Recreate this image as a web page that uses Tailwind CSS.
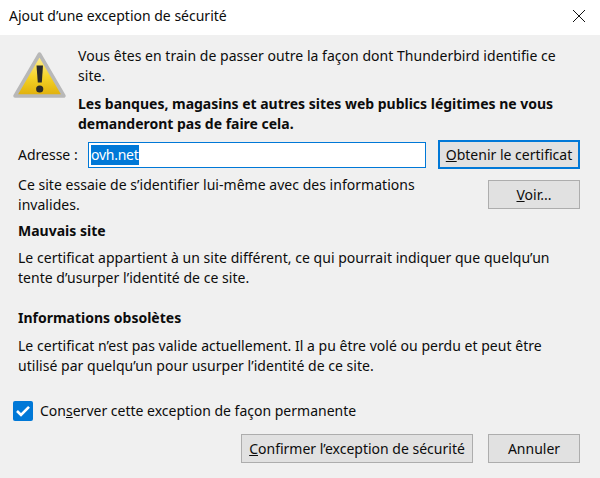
<!DOCTYPE html>
<html lang="fr">
<head>
  <meta charset="UTF-8" />
  <title>Ajout d'une exception de sécurité</title>
  <script src="https://cdn.jsdelivr.net/npm/@tailwindcss/browser@4"></script>
</head>
<body class="w-[600px] h-[478px] overflow-hidden bg-[#f0f0f0] font-['Noto_Sans',sans-serif] text-[14px] leading-[20px] text-[#0c0c0c]">
  <!-- Title bar -->
  <div class="h-[35px] bg-white flex items-center justify-between pl-[9px] pr-[14px] pb-[3px]">
    <span>Ajout d’une exception de sécurité</span>
    <svg width="14" height="14" viewBox="0 0 14 14" fill="none" stroke="#111" stroke-width="1"><path d="M1 1l12 12M13 1L1 13"/></svg>
  </div>

  <div class="pl-[18px] pr-[20px]">
    <!-- Warning -->
    <div class="flex pt-[11px] h-[105px]">
      <svg class="w-[56px] h-[50px] ml-[-5px] mr-[9px] mt-[5px] shrink-0" width="56" height="50" viewBox="0 0 56 50">
        <defs>
          <linearGradient id="warnFill" x1="0" y1="0" x2="0" y2="1">
            <stop offset="0" stop-color="#fdf0a0"/>
            <stop offset="0.55" stop-color="#f5d327"/>
            <stop offset="1" stop-color="#dfae0a"/>
          </linearGradient>
        </defs>
        <path d="M26.5 3L51 45H2Z" fill="url(#warnFill)" stroke="#b8b8b8" stroke-width="3.5" stroke-linejoin="round"/>
        <path d="M23.5 14.5h6.5l-1.2 17h-4Z" fill="#2a2a2a"/>
        <circle cx="26.7" cy="38" r="3.6" fill="#2a2a2a"/>
      </svg>
      <div class="whitespace-nowrap tracking-[0.03px]">
        <p>Vous êtes en train de passer outre la façon dont Thunderbird identifie ce<br>site.</p>
        <p class="font-bold mt-[8px] tracking-[-0.01px]">Les banques, magasins et autres sites web publics légitimes ne vous<br>demanderont pas de faire cela.</p>
      </div>
    </div>

    <!-- Address -->
    <div class="flex items-center h-[29px]">
      <span class="w-[70px] shrink-0">Adresse :</span>
      <div class="w-[338px] h-[26px] bg-white border border-[#0078d7] flex items-center pl-[2px]">
        <span class="bg-[#0078d7] text-white h-[20px] tracking-[-0.25px]">ovh.net</span>
      </div>
      <button class="ml-[12px] w-[142px] h-[29px] bg-[#e1e1e1] border-2 border-[#0078d7]"><u>O</u>btenir le certificat</button>
    </div>

    <!-- Status -->
    <div class="flex justify-between mt-[6px] h-[41px]">
      <p class="whitespace-nowrap tracking-[0.03px]">Ce site essaie de s’identifier lui-même avec des informations<br>invalides.</p>
      <button class="w-[92px] h-[29px] mt-[5px] bg-[#e1e1e1] border border-[#adadad]"><u>V</u>oir...</button>
    </div>

    <h2 class="font-bold mt-[5px]">Mauvais site</h2>
    <p class="mt-[7px] whitespace-nowrap tracking-[0.03px]">Le certificat appartient à un site différent, ce qui pourrait indiquer que quelqu’un<br>tente d’usurper l’identité de ce site.</p>

    <h2 class="font-bold mt-[20px]">Informations obsolètes</h2>
    <p class="mt-[8px] whitespace-nowrap tracking-[0.03px]">Le certificat n’est pas valide actuellement. Il a pu être volé ou perdu et peut être<br>utilisé par quelqu’un pour usurper l’identité de ce site.</p>

    <!-- Permanent -->
    <div class="flex items-center mt-[23px] h-[24px] ml-[-5px]">
      <span class="w-[20px] h-[20px] rounded-[2px] bg-[#0078d7] flex items-center justify-center">
        <svg width="14" height="12" viewBox="0 0 14 12" fill="none" stroke="#fff" stroke-width="2.6"><path d="M1 6l4 4L13 1.8"/></svg>
      </span>
      <span class="ml-[7px]">Con<u>s</u>erver cette exception de façon permanente</span>
    </div>

    <!-- Actions -->
    <div class="flex justify-end gap-[15px] mt-[11px]">
      <button class="w-[232px] h-[29px] bg-[#e1e1e1] border border-[#adadad] whitespace-nowrap"><u>C</u>onfirmer l’exception de sécurité</button>
      <button class="w-[92px] h-[29px] bg-[#e1e1e1] border border-[#adadad]">Annuler</button>
    </div>
  </div>
</body>
</html>
